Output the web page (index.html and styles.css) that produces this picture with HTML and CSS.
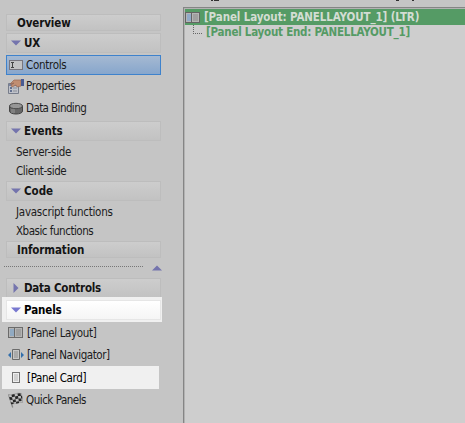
FILE: index.html
```html
<!DOCTYPE html>
<html lang="en">
<head>
<meta charset="utf-8">
<title>Panel Layout</title>
<link rel="stylesheet" href="styles.css">
</head>
<body>
<div class="app">
  <nav class="sidebar">
    <div class="head flat"><span class="w-overview">Overview</span></div>
    <div class="head tall"><svg class="arrow" width="10" height="6"><path d="M0 .5h10L5 5.500z"/></svg><span class="w-ux">UX</span></div>
    <div class="item selected">
      <svg width="16" height="16" shape-rendering="crispEdges"><path d="M1.500 3.500h13v9h-13z" fill="#c3c3c5" stroke="#78767f"/><path d="M3 5.500h3M3 10.500h3M4.500 5v6" stroke="#444" fill="none"/></svg>
      <span class="w-controls">Controls</span>
    </div>
    <div class="item">
      <svg width="16" height="16"><path d="M.5 5.500h10v10H.5z" fill="#bfc2ca" stroke="#777d8b"/><path d="M1 6h9v2H1z" fill="#7984a1"/><path d="M2 10h2M2 13h2" stroke="#45577e" stroke-width="1.500"/><path d="M5 10h4M5 13h4" stroke="#8b8f98"/><path d="M2 6l4-4 7 0v6l-4 1-1-2-4 2-1-2 3-2z" fill="#c18e72" stroke="#966753" stroke-width=".7"/><path d="M13 1h3v7h-3z" fill="#485b93"/></svg>
      <span class="w-properties">Properties</span>
    </div>
    <div class="item">
      <svg width="16" height="16"><path d="M1.500 6v5c0 4 13 4 13 0V6" fill="#686868" stroke="#444"/><path d="M4 9v4M6 9v4" stroke="#999"/><ellipse cx="8" cy="6" rx="6.500" ry="2.700" fill="#969696" stroke="#4b4b4b"/></svg>
      <span class="w-binding">Data Binding</span>
    </div>
    <div class="head tall"><svg class="arrow" width="10" height="6"><path d="M0 .5h10L5 5.500z"/></svg><span class="w-events">Events</span></div>
    <div class="sub first"><span class="w-server">Server-side</span></div>
    <div class="sub"><span class="w-client">Client-side</span></div>
    <div class="head tall code"><svg class="arrow" width="10" height="6"><path d="M0 .5h10L5 5.500z"/></svg><span class="w-code">Code</span></div>
    <div class="sub first"><span class="w-js">Javascript functions</span></div>
    <div class="sub"><span class="w-xb">Xbasic functions</span></div>
    <div class="head flat info"><span class="w-info">Information</span></div>
    <div class="divider"><i></i><svg class="arrow" width="10" height="6"><path d="M0 5.500h10L5 .5z"/></svg></div>
    <div class="head data"><svg class="arrow side" width="6" height="10"><path d="M.5 0v10L5.500 5z"/></svg><span class="w-data">Data Controls</span></div>
    <div class="spot-head"><div class="head tall lit"><svg class="arrow" width="10" height="6"><path d="M0 .5h10L5 5.500z"/></svg><span class="w-panels">Panels</span></div></div>
    <div class="item bracket">
      <svg width="16" height="16" shape-rendering="crispEdges"><path d="M.5 2.500h14v10H.5z" fill="#b5b5b5" stroke="#6b6b6b"/><path d="M2 4h4v7H2z" fill="#91aac2"/><path d="M6.500 3v9" stroke="#6b6b6b"/><path d="M8 4h5v7H8z" fill="#a0a0a0"/></svg>
      <span class="w-layout">[Panel Layout]</span>
    </div>
    <div class="item bracket">
      <svg width="16" height="16"><path d="M4.500 2.500h7v10h-7z" fill="#c6c6c6" stroke="#6b6b6b"/><path d="M6 4h4v7H6z" fill="#aaa"/><path d="M3 5v6L0 8zM13 5v6l3-3z" fill="#326fac"/></svg>
      <span class="w-navigator">[Panel Navigator]</span>
    </div>
    <div class="item bracket spot">
      <svg width="16" height="16" shape-rendering="crispEdges"><path d="M4.500 2.500h7v10h-7z" fill="#eee" stroke="#757575"/><path d="M6 4h4v7H6z" fill="#d0d0d0"/></svg>
      <span class="w-card">[Panel Card]</span>
    </div>
    <div class="item quick">
      <svg width="16" height="16"><path d="M.7 2.500l4 13" stroke="#888" stroke-width="1.300"/><path d="M.5 2.500q3 1 6-.5t7-.5l1.200 9q-3-.5-5.500.5t-6 .5z" fill="#bdbdbd" stroke="#888" stroke-width=".5"/><path d="M3.500 2.700l3-.7.5 2.500-3 .7zM9.500 1.500l3-.3.400 2.500-3 .3zM1.200 5l2.800.2.700 2.800-2.800-.2zM7 4.500l3-.8.4 2.800-3 .8zM12.800 3.700l1.200.1.400 2.700-1.200 0zM4.700 8l2.800-.7.5 2.500-2.800.7zM10.400 6.500l2.800 0 .4 2.500-2.800.2zM2.800 10.300l2.400.2.500 1.500-2.500.2zM8 9.800l2.800-.6.3 1.800-2.800.7z" fill="#252525"/></svg>
      <span class="w-quick">Quick Panels</span>
    </div>
  </nav>
  <main class="content">
    <div class="clipped"><i class="mark-a"></i><i class="mark-b"></i><i class="mark-c"></i><i class="mark-d"></i></div>
    <section class="tree">
      <div class="root">
        <svg width="15" height="11" shape-rendering="crispEdges"><path d="M.5 .5h14v10H.5z" fill="#b5b5b5" stroke="#646464"/><path d="M2 2h4v7H2z" fill="#91aac9"/><path d="M6.500 1v9" stroke="#646464"/><path d="M8 2h5v7H8z" fill="#a0a0a0"/></svg>
        <span class="w-root">[Panel Layout: PANELLAYOUT_1] (LTR)</span>
      </div>
      <div class="child"><i></i><span class="w-end">[Panel Layout End: PANELLAYOUT_1]</span></div>
    </section>
  </main>
</div>
</body>
</html>
```
FILE: styles.css
```css
* { box-sizing: border-box; }
body {
  margin: 0;
  background: #c5c5c5;
  color: #1b1b20;
  font: 11.5px/14px "DejaVu Sans Condensed", "DejaVu Sans", sans-serif;
  font-stretch: condensed;
  white-space: nowrap;
  overflow: hidden;
}
svg { display: block; flex: none; }
.app { display: flex; width: 465px; height: 423px; }
.sidebar { width: 183px; flex: none; padding-top: 14px; }
.head {
  display: flex;
  align-items: center;
  width: 155px;
  height: 20px;
  margin-left: 6px;
  padding-left: 4px;
  border: 1px solid #bdbdbd;
  background: linear-gradient(#cdcdcd, #c2c2c2);
  color: #141414;
  font-weight: bold;
}
.tall { margin-top: 2px; }
.tall span, .data span { padding-bottom: 1px; }
.flat { height: 17px; padding-left: 10px; }
.arrow { margin-right: 3px; fill: #7474ad; }
.arrow.side { margin: 0 5px 0 2px; }
.item { display: flex; align-items: center; height: 22px; margin-left: 8px; }
.item span { margin-left: 2px; }
.bracket span { margin-left: 3px; }
.selected {
  width: 155px;
  height: 20px;
  margin: 2px 0 0 6px;
  padding-left: 1px;
  border: 1px solid #3e82cc;
  background: linear-gradient(#a5b9d2, #87a6cc);
}
.selected span { margin-bottom: 1px; }
.sub { height: 18px; margin-top: 1px; padding-left: 16px; line-height: 18px; }
.sub.first { margin-top: 2px; }
.code { margin-top: 1px; }
.info { margin-top: 1px; }
.divider { display: flex; align-items: center; height: 20px; padding-left: 4px; }
.divider i { width: 139px; height: 1px; margin: 0 9px 3px 0; background: repeating-linear-gradient(90deg, #777 0 1px, transparent 1px 2px); }
.data { height: 19px; border-bottom: 0; }
.spot-head { width: 160px; height: 25px; margin-left: 2px; padding: 3px 0 0 4px; background: #f0f0f0; }
.lit { width: 155px; margin: 0; border-color: #e6e6e6; background: linear-gradient(#fff, #f5f5f5); color: #000; }
.lit .arrow { fill: #7878d0; }
.spot { width: 157px; height: 23px; margin-left: 2px; padding-left: 6px; background: #f0f0f0; color: #000; }
.quick { height: 21px; }
.content { flex: 1; min-width: 0; }
.clipped { display: flex; height: 7px; }
.clipped i { height: 1px; background: #303030; }
.mark-a { width: 2px; margin-left: 28px; }
.mark-b { width: 5px; margin-left: 1px; }
.mark-c { width: 3px; margin-left: 177px; }
.mark-d { width: 2px; margin-left: 13px; }
.tree { height: 416px; border: solid #858585; border-width: 1px 0 0 1px; box-shadow: inset 1px 1px #b2b2b2; padding: 1px 0 0 1px; background: #cecece; font-weight: bold; }
.root { display: flex; align-items: center; height: 16px; background: #559b65; color: #d3ddd3; }
.root span { margin-left: 4px; padding-bottom: 1px; }
.child { display: flex; color: #559b65; padding-left: 8px; }
.child i { width: 9px; height: 9px; border: dotted #666; border-width: 0 0 1px 1px; }
.child span { margin-left: 4px; }
.w-overview, .w-ux, .w-events, .w-info, .w-panels { letter-spacing: -.12px; }
.w-data { letter-spacing: -.23px; }
.w-controls, .w-properties { letter-spacing: -.3px; }
.w-binding { letter-spacing: -.58px; }
.w-server { letter-spacing: -.27px; }
.w-js { letter-spacing: -.25px; }
.w-client, .w-navigator { letter-spacing: -.42px; }
.w-xb, .w-quick { letter-spacing: -.48px; }
.w-layout, .w-card { letter-spacing: -.36px; }
.w-root { letter-spacing: -.11px; }
.w-end { letter-spacing: -.24px; }
```
